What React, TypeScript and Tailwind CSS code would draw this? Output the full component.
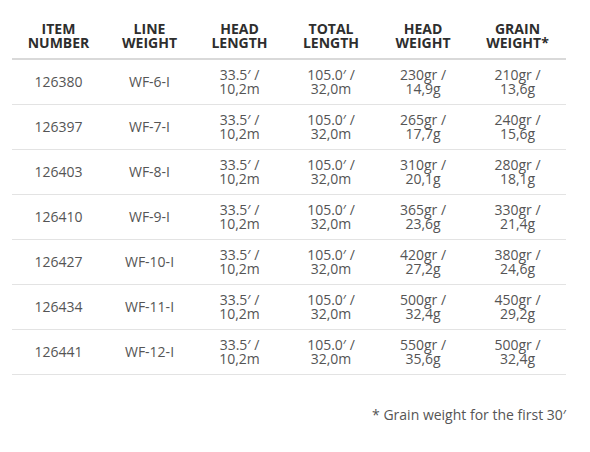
const headers = [
  ["ITEM", "NUMBER"],
  ["LINE", "WEIGHT"],
  ["HEAD", "LENGTH"],
  ["TOTAL", "LENGTH"],
  ["HEAD", "WEIGHT"],
  ["GRAIN", "WEIGHT*"],
];

const rows = [
  ["126380", "WF-6-I", "230gr /", "14,9g", "210gr /", "13,6g"],
  ["126397", "WF-7-I", "265gr /", "17,7g", "240gr /", "15,6g"],
  ["126403", "WF-8-I", "310gr /", "20,1g", "280gr /", "18,1g"],
  ["126410", "WF-9-I", "365gr /", "23,6g", "330gr /", "21,4g"],
  ["126427", "WF-10-I", "420gr /", "27,2g", "380gr /", "24,6g"],
  ["126434", "WF-11-I", "500gr /", "32,4g", "450gr /", "29,2g"],
  ["126441", "WF-12-I", "550gr /", "35,6g", "500gr /", "32,4g"],
];

const cols = "grid grid-cols-[93px_89px_91px_92px_92px_97px]";

function Two({ a, b }: { a: string; b: string }) {
  return (
    <div className="flex flex-col items-center">
      <span>{a}</span>
      <span>{b}</span>
    </div>
  );
}

export default function App() {
  return (
    <div
      className="w-[590px] h-[452px] bg-white pt-[22px] pl-[12px]"
      style={{ fontFamily: "'Open Sans', sans-serif" }}
    >
      <div className="w-[554px]">
        <div className={`${cols} border-b-2 border-[#d9d9d9] pb-[8px] text-[14px] leading-[14px] font-bold text-[#2e2e2e] text-center`}>
          {headers.map((h, i) => (
            <Two key={i} a={h[0]} b={h[1]} />
          ))}
        </div>
        {rows.map((r) => (
          <div
            key={r[0]}
            className={`${cols} h-[45px] border-b border-[#e3e3e3] items-center text-[14px] leading-[14px] text-[#555] text-center`}
          >
            <span>{r[0]}</span>
            <span>{r[1]}</span>
            <Two a="33.5′ /" b="10,2m" />
            <Two a="105.0′ /" b="32,0m" />
            <Two a={r[2]} b={r[3]} />
            <Two a={r[4]} b={r[5]} />
          </div>
        ))}
        <p className="mt-[30px] text-right text-[14px] leading-[20px] text-[#555]">
          * Grain weight for the first 30′
        </p>
      </div>
    </div>
  );
}
